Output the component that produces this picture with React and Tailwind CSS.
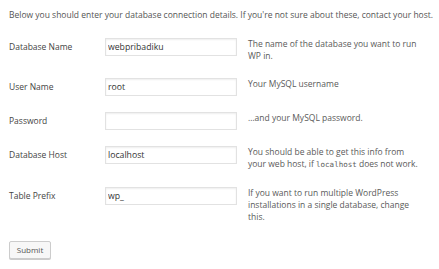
import { useState } from "react";

const fields = [
  { label: "Database Name", name: "dbname", value: "webpribadiku", desc: <>The name of the database you want to run WP in.</> },
  { label: "User Name", name: "uname", value: "root", desc: <>Your MySQL username</> },
  { label: "Password", name: "pwd", value: "", desc: <>…and your MySQL password.</> },
  {
    label: "Database Host",
    name: "dbhost",
    value: "localhost",
    desc: (
      <>
        You should be able to get this info from your web host, if{" "}
        <code className="font-['DejaVu_Sans_Mono',monospace] text-[7.5px]">localhost</code> does not work.
      </>
    ),
  },
  { label: "Table Prefix", name: "prefix", value: "wp_", desc: <>If you want to run multiple WordPress installations in a single database, change this.</> },
];

export default function App() {
  const [values, setValues] = useState(() => Object.fromEntries(fields.map((f) => [f.name, f.value])));

  return (
    <div className="w-[439px] h-[269px] bg-white px-[9px] pt-[9px] font-['Open_Sans',sans-serif] text-[8.5px] text-[#555]">
      <p className="leading-[12px] whitespace-nowrap">
        Below you should enter your database connection details. If you're not sure about these, contact your host.
      </p>

      {/* Form rows */}
      <div className="mt-[9px] flex flex-col">
        {fields.map((f) => (
          <div key={f.name} className="grid grid-cols-[85px_132px_172px] gap-x-[11px] items-start py-2">
            <label className="leading-[18px] text-[#444]">{f.label}</label>
            <input
              value={values[f.name]}
              onChange={(e) => setValues({ ...values, [f.name]: e.target.value })}
              type={f.name === "pwd" ? "password" : "text"}
              className="h-[18px] w-[132px] border border-[#e2e2e2] px-[2px] text-[8.7px] text-[#333] shadow-[inset_0_1px_2px_rgba(0,0,0,0.07)] outline-none"
            />
            <p className="leading-[12px] text-[#5a5a5a]">{f.desc}</p>
          </div>
        ))}
      </div>

      <button className="mt-[10px] h-[18px] w-[42px] rounded-[2px] border border-[#ccc] bg-[#f7f7f7] text-[8px] text-[#555] shadow-[0_1px_0_#ccc]">
        Submit
      </button>
    </div>
  );
}
